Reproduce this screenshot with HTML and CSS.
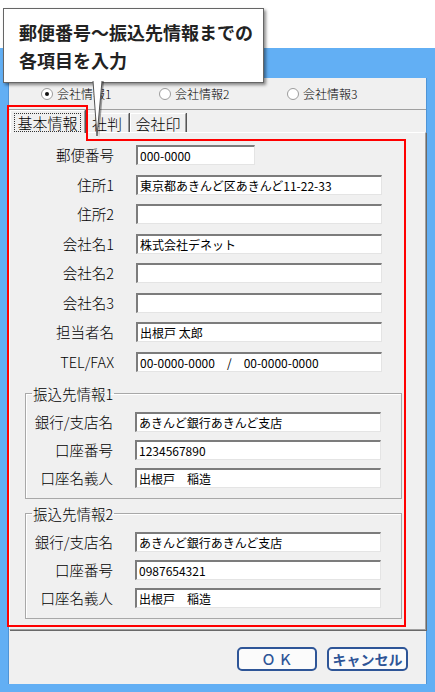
FILE: index.html
```html
<!DOCTYPE html>
<html lang="ja">
<head>
  <meta charset="UTF-8" />
  <meta name="viewport" content="width=device-width, initial-scale=1.0"/>
  <title>会社情報</title>
  <link rel="stylesheet" href="styles.css">
</head>
<body>
  <div class="page">
    <div class="window">
      <div class="titlebar"></div>
      <div class="client">
        <div class="radios">
          <label class="radio"><span class="circle on"></span>会社情報1</label>
          <label class="radio"><span class="circle"></span>会社情報2</label>
          <label class="radio"><span class="circle"></span>会社情報3</label>
        </div>

        <div class="tabs">
          <div class="tab-strip">
            <div class="tab active"><span class="focus">基本情報</span></div>
            <div class="tab">社判</div>
            <div class="tab">会社印</div>
          </div>
          <div class="panel">
            <div class="form">
              <span class="lbl">郵便番号</span><input class="field short" type="text" value="000-0000" readonly>
              <span class="lbl">住所1</span><input class="field" type="text" value="東京都あきんど区あきんど11-22-33" readonly>
              <span class="lbl">住所2</span><input class="field" type="text" value="" readonly>
              <span class="lbl">会社名1</span><input class="field" type="text" value="株式会社デネット" readonly>
              <span class="lbl">会社名2</span><input class="field" type="text" value="" readonly>
              <span class="lbl">会社名3</span><input class="field" type="text" value="" readonly>
              <span class="lbl">担当者名</span><input class="field" type="text" value="出根戸 太郎" readonly>
              <span class="lbl">TEL/FAX</span><input class="field" type="text" value="00-0000-0000　/　00-0000-0000" readonly>
            </div>

            <fieldset class="group">
              <legend>振込先情報1</legend>
              <div class="form sub">
                <span class="lbl">銀行/支店名</span><input class="field" type="text" value="あきんど銀行あきんど支店" readonly>
                <span class="lbl">口座番号</span><input class="field" type="text" value="1234567890" readonly>
                <span class="lbl">口座名義人</span><input class="field" type="text" value="出根戸　稲造" readonly>
              </div>
            </fieldset>

            <fieldset class="group second">
              <legend>振込先情報2</legend>
              <div class="form sub">
                <span class="lbl">銀行/支店名</span><input class="field" type="text" value="あきんど銀行あきんど支店" readonly>
                <span class="lbl">口座番号</span><input class="field" type="text" value="0987654321" readonly>
                <span class="lbl">口座名義人</span><input class="field" type="text" value="出根戸　稲造" readonly>
              </div>
            </fieldset>
          </div>
        </div>

        <div class="buttons">
          <button class="btn ok">Ｏ Ｋ</button>
          <button class="btn cancel">キャンセル</button>
        </div>
      </div>
    </div>

    <!-- annotation overlays -->
    <div class="hl hl-tab"></div>
    <div class="hl hl-body"></div>
    <div class="hl hl-top"></div>

    <div class="callout">郵便番号～振込先情報までの<br>各項目を入力</div>
    <svg class="tail" width="22" height="60" viewBox="0 0 22 60">
      <polygon points="7,0 16,0 11,57" fill="rgba(0,0,0,0.35)"/>
      <polygon points="5,0 14,0 9,55" fill="#fff"/>
      <polyline points="5,0 9,55 14,0" fill="none" stroke="#555" stroke-width="1"/>
    </svg>
  </div>
</body>
</html>
```

FILE: styles.css
```css
body {
  margin: 0;
  background-color: #fff;
  font-family: "Noto Sans CJK JP", sans-serif;
  color: #000;
}
.page {
  position: relative;
  width: 435px;
  height: 692px;
  padding-top: 48px;
  box-sizing: border-box;
  overflow: hidden;
}
.window {
  background-color: #62aff4;
  padding: 0 8px 8px 8px;
  height: 644px;
  box-sizing: border-box;
}
.titlebar {
  height: 30px;
}
.client {
  background-color: #f0f0f0;
  height: 606px;
  box-sizing: border-box;
  border-left: 1px solid #4f94d6;
  border-right: 1px solid #4f94d6;
}

/* radio row */
.radios {
  display: grid;
  grid-template-columns: 118px 128px 1fr;
  align-items: center;
  height: 32px;
  padding-left: 32px;
  border-bottom: 1px solid #a0a0a0;
  box-sizing: border-box;
  font-size: 12px;
  font-weight: 300;
}
.radio {
  display: flex;
  align-items: center;
  gap: 4px;
  line-height: 14px;
}
.circle {
  width: 12px;
  height: 12px;
  border-radius: 50%;
  box-sizing: border-box;
  border: 1px solid #9c9c9c;
  background-color: #fff;
  display: flex;
  align-items: center;
  justify-content: center;
}
.circle.on::after {
  content: "";
  width: 4px;
  height: 4px;
  border-radius: 50%;
  background-color: #111;
}

/* tab control */
.tabs {
  width: 417px;
}
.tab-strip {
  display: flex;
  align-items: flex-end;
  height: 22px;
  padding-left: 1px;
  font-size: 15px;
  font-weight: 300;
}
.tab {
  height: 19px;
  box-sizing: border-box;
  border-top: 1px solid #fff;
  border-left: 1px solid #fff;
  border-right: 1px solid #9a9a9a;
  box-shadow: 1px 0 0 #555;
  display: flex;
  align-items: center;
  justify-content: center;
  line-height: 17px;
  width: 44px;
}
.tab:nth-child(3) {
  width: 56px;
  margin-left: 1px;
}
.tab.active {
  position: relative;
  z-index: 1;
  width: 75px;
  height: 23px;
  margin-bottom: -1px;
  background-color: #f0f0f0;
}
.focus {
  border: 1px dotted #333;
  padding: 0 2px;
  line-height: 17px;
}
.panel {
  height: 498px;
  box-sizing: border-box;
  border-top: 1px solid #fff;
  border-left: 1px solid #fff;
  border-right: 1px solid #a0a0a0;
  border-bottom: 1px solid #a0a0a0;
  box-shadow: 1px 1px 0 #696969;
}

/* form rows */
.form {
  display: grid;
  grid-template-columns: 104px 246px;
  column-gap: 22px;
  grid-auto-rows: 20px;
  row-gap: 9.57px;
  align-items: center;
  padding-top: 12px;
}
.form.sub {
  grid-template-columns: 81px 246px;
  row-gap: 8px;
  padding-top: 0;
}
.lbl {
  text-align: right;
  font-size: 14.5px;
  font-weight: 300;
  line-height: 18px;
  white-space: nowrap;
}
.field {
  width: 246px;
  height: 20px;
  box-sizing: border-box;
  margin: 0;
  padding: 0 2px;
  border-style: solid;
  border-width: 2px 1px 1px 2px;
  border-color: #7c7c7c #e4e4e4 #e4e4e4 #7c7c7c;
  background-color: #fff;
  font-family: "Noto Sans CJK JP", sans-serif;
  font-size: 12px;
  color: #000;
  outline: none;
}
.field.short {
  width: 119px;
}

/* group boxes */
.group {
  margin: 14px 0 0 15px;
  width: 377px;
  box-sizing: border-box;
  padding: 10px 0 10px 6px;
  border: 1px solid #a8a8a8;
  box-shadow: inset 1px 1px 0 #fff;
}
.group.second {
  margin-top: 7px;
}
.group legend {
  padding: 0 1px;
  font-size: 14.5px;
  font-weight: 300;
  line-height: 16px;
}

/* buttons */
.buttons {
  display: flex;
  justify-content: flex-end;
  gap: 10px;
  margin-top: 17px;
  padding-right: 18px;
}
.btn {
  height: 24px;
  box-sizing: border-box;
  border: 2px solid #2e5597;
  border-radius: 5px;
  background-color: #fbfbfb;
  color: #2e5597;
  font-family: "Noto Sans CJK JP", sans-serif;
  font-weight: bold;
  font-size: 14px;
  line-height: 18px;
  padding: 0;
}
.btn.ok {
  width: 80px;
  font-weight: 500;
}
.btn.cancel {
  width: 81px;
}

/* annotation: red highlight */
.hl {
  position: absolute;
  box-sizing: border-box;
  border: 0 solid #f00;
}
.hl-tab {
  left: 7px;
  top: 105px;
  width: 81px;
  height: 36px;
  border-width: 2px 2px 0 2px;
}
.hl-body {
  left: 7px;
  top: 139px;
  width: 399px;
  height: 488px;
  border-width: 0 2px 2px 2px;
}
.hl-top {
  left: 86px;
  top: 139px;
  width: 320px;
  height: 2px;
  background-color: #f00;
}

/* annotation: callout */
.callout {
  position: absolute;
  left: 3px;
  top: 8px;
  width: 261px;
  height: 75px;
  box-sizing: border-box;
  padding: 9px 0 0 15px;
  background-color: #fff;
  border: 1px solid #666;
  box-shadow: 2px 2px 3px rgba(0,0,0,0.45);
  font-size: 18px;
  font-weight: bold;
  line-height: 28px;
  color: #222;
  white-space: nowrap;
}
.tail {
  position: absolute;
  left: 88px;
  top: 81px;
}
```
